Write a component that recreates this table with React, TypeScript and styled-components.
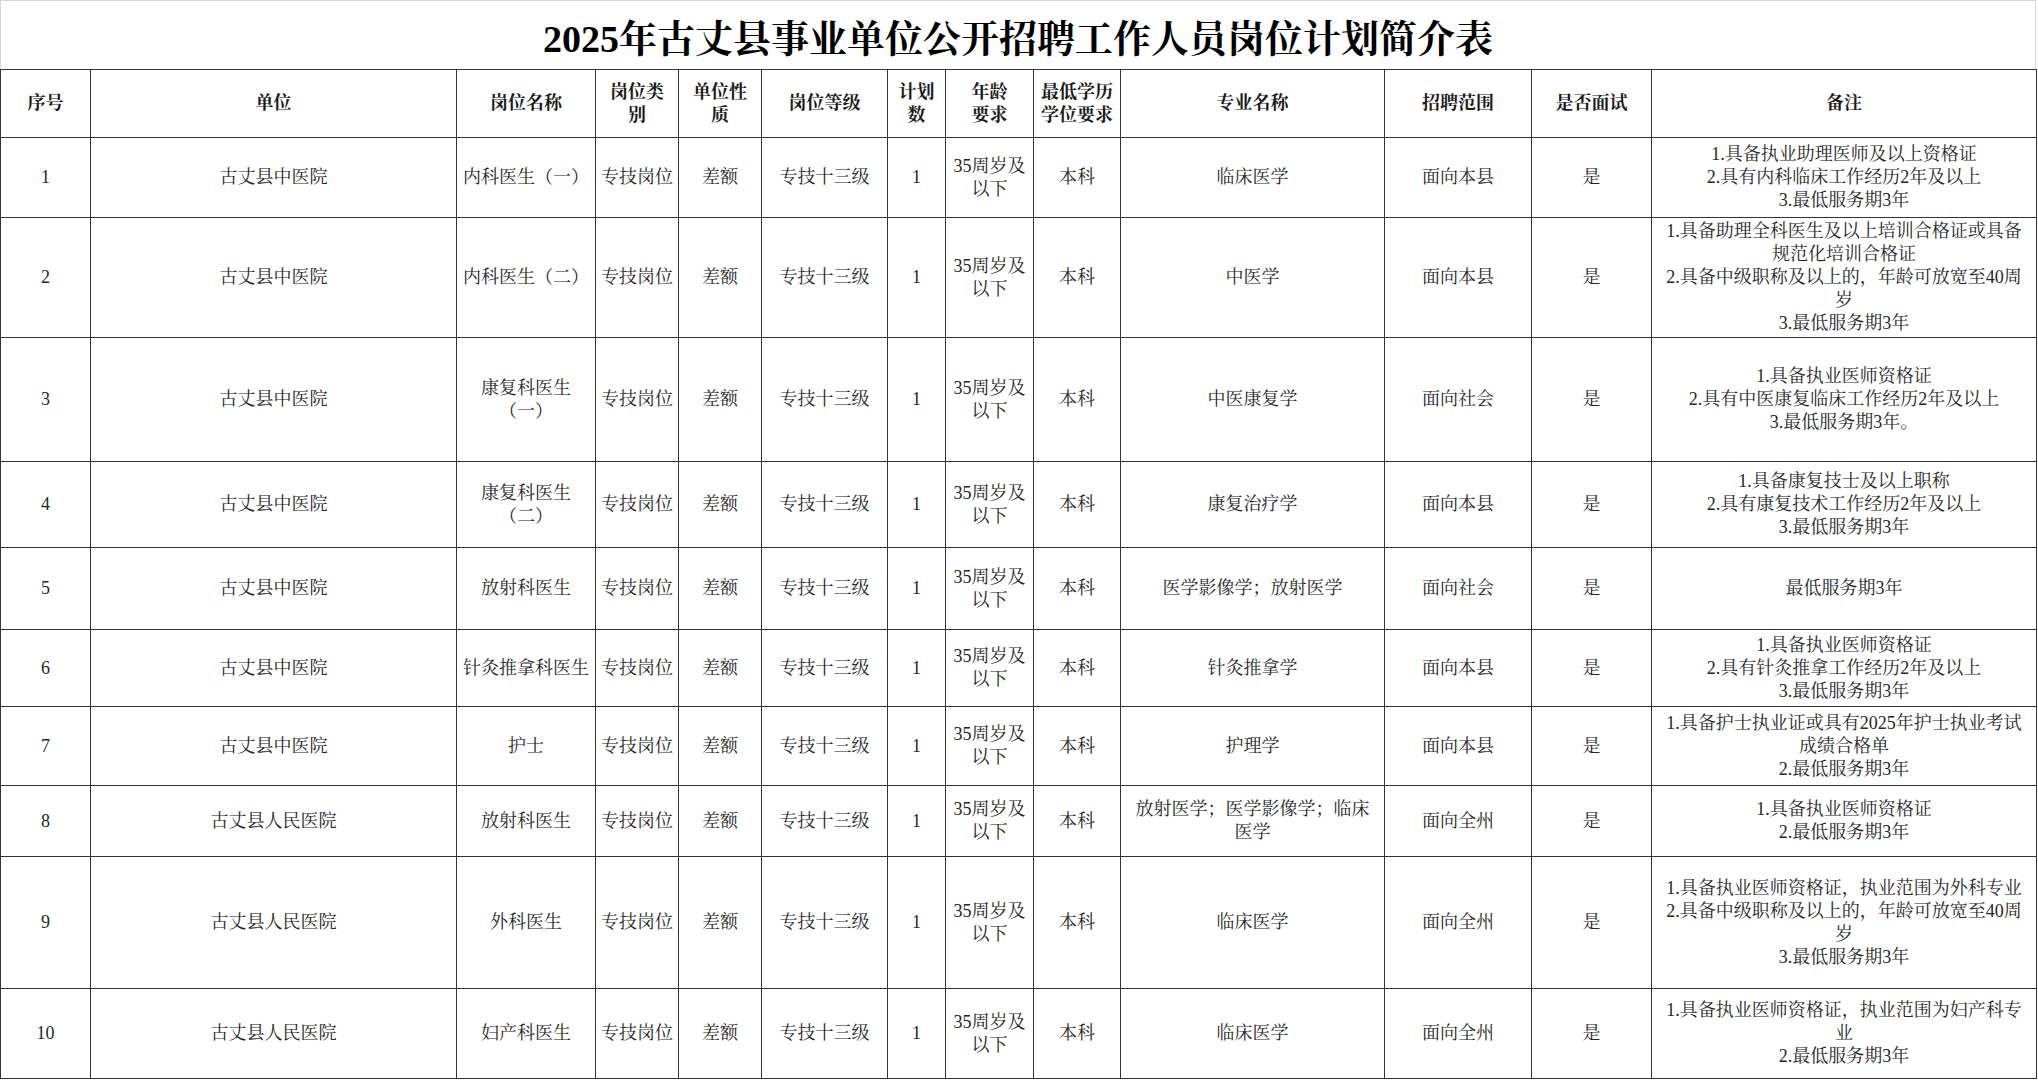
import { FC } from 'react';
import styled, { createGlobalStyle } from 'styled-components';

const GlobalStyle = createGlobalStyle`
  html, body {
    margin: 0;
    padding: 0;
    background: #ffffff;
  }
  body {
    font-family: "Liberation Serif", "Noto Serif CJK SC", "Noto Sans CJK SC", serif;
    color: #1e1e1e;
  }
`;

const Page = styled.div`
  width: 2038px;
  height: 1080px;
  overflow: hidden;
  background: #fff;
`;

const TitleBar = styled.div`
  box-sizing: border-box;
  width: 2036px;
  height: 69px;
  border: 1px solid #d6d6d6;
  border-bottom: none;
  display: flex;
  align-items: center;
  justify-content: center;
`;

const Title = styled.h1`
  margin: 0;
  font-size: 38px;
  font-weight: 700;
  color: #000;
  letter-spacing: 0;
  font-family: "Liberation Serif", "Noto Serif CJK SC", "Noto Sans CJK SC", serif;
`;

const Table = styled.table`
  width: 2036px;
  table-layout: fixed;
  border-collapse: collapse;
  font-size: 18px;
  line-height: 23px;
`;

const HeadRow = styled.tr`
  height: 68px;
`;

const Row = styled.tr<{ $h: number }>`
  height: ${(p) => p.$h}px;
`;

const Th = styled.th`
  border: 1px solid #333;
  padding: 0 2px;
  font-weight: 700;
  text-align: center;
  vertical-align: middle;
  white-space: pre;
  color: #1a1a1a;
`;

const Td = styled.td`
  border: 1px solid #333;
  padding: 0 2px;
  text-align: center;
  vertical-align: middle;
  white-space: pre;
  color: #262626;
`;

const widths = [90, 366, 139, 83, 83, 126, 58, 88, 87, 264, 147, 120, 385];

const headers = [
  '序号',
  '单位',
  '岗位名称',
  '岗位类\n别',
  '单位性\n质',
  '岗位等级',
  '计划\n数',
  '年龄\n要求',
  '最低学历\n学位要求',
  '专业名称',
  '招聘范围',
  '是否面试',
  '备注',
];

interface Post {
  h: number;
  unit: string;
  name: string;
  major: string;
  scope: string;
  note: string;
}

const ZYY = '古丈县中医院';
const RMYY = '古丈县人民医院';

const posts: Post[] = [
  {
    h: 80,
    unit: ZYY,
    name: '内科医生（一）',
    major: '临床医学',
    scope: '面向本县',
    note: '1.具备执业助理医师及以上资格证\n2.具有内科临床工作经历2年及以上\n3.最低服务期3年',
  },
  {
    h: 120,
    unit: ZYY,
    name: '内科医生（二）',
    major: '中医学',
    scope: '面向本县',
    note: '1.具备助理全科医生及以上培训合格证或具备\n规范化培训合格证\n2.具备中级职称及以上的，年龄可放宽至40周\n岁\n3.最低服务期3年',
  },
  {
    h: 124,
    unit: ZYY,
    name: '康复科医生\n（一）',
    major: '中医康复学',
    scope: '面向社会',
    note: '1.具备执业医师资格证\n2.具有中医康复临床工作经历2年及以上\n3.最低服务期3年。',
  },
  {
    h: 86,
    unit: ZYY,
    name: '康复科医生\n（二）',
    major: '康复治疗学',
    scope: '面向本县',
    note: '1.具备康复技士及以上职称\n2.具有康复技术工作经历2年及以上\n3.最低服务期3年',
  },
  {
    h: 82,
    unit: ZYY,
    name: '放射科医生',
    major: '医学影像学；放射医学',
    scope: '面向社会',
    note: '最低服务期3年',
  },
  {
    h: 77,
    unit: ZYY,
    name: '针灸推拿科医生',
    major: '针灸推拿学',
    scope: '面向本县',
    note: '1.具备执业医师资格证\n2.具有针灸推拿工作经历2年及以上\n3.最低服务期3年',
  },
  {
    h: 79,
    unit: ZYY,
    name: '护士',
    major: '护理学',
    scope: '面向本县',
    note: '1.具备护士执业证或具有2025年护士执业考试\n成绩合格单\n2.最低服务期3年',
  },
  {
    h: 71,
    unit: RMYY,
    name: '放射科医生',
    major: '放射医学；医学影像学；临床\n医学',
    scope: '面向全州',
    note: '1.具备执业医师资格证\n2.最低服务期3年',
  },
  {
    h: 132,
    unit: RMYY,
    name: '外科医生',
    major: '临床医学',
    scope: '面向全州',
    note: '1.具备执业医师资格证，执业范围为外科专业\n2.具备中级职称及以上的，年龄可放宽至40周\n岁\n3.最低服务期3年',
  },
  {
    h: 90,
    unit: RMYY,
    name: '妇产科医生',
    major: '临床医学',
    scope: '面向全州',
    note: '1.具备执业医师资格证，执业范围为妇产科专\n业\n2.最低服务期3年',
  },
];

const App: FC = () => (
  <Page>
    <GlobalStyle />
    <TitleBar>
      <Title>2025年古丈县事业单位公开招聘工作人员岗位计划简介表</Title>
    </TitleBar>
    <Table>
      <colgroup>
        {widths.map((w, i) => (
          <col key={i} style={{ width: w }} />
        ))}
      </colgroup>
      <thead>
        <HeadRow>
          {headers.map((h) => (
            <Th key={h}>{h}</Th>
          ))}
        </HeadRow>
      </thead>
      <tbody>
        {posts.map((p, i) => (
          <Row key={i} $h={p.h}>
            <Td>{i + 1}</Td>
            <Td>{p.unit}</Td>
            <Td>{p.name}</Td>
            <Td>专技岗位</Td>
            <Td>差额</Td>
            <Td>专技十三级</Td>
            <Td>1</Td>
            <Td>{'35周岁及\n以下'}</Td>
            <Td>本科</Td>
            <Td>{p.major}</Td>
            <Td>{p.scope}</Td>
            <Td>是</Td>
            <Td>{p.note}</Td>
          </Row>
        ))}
      </tbody>
    </Table>
  </Page>
);

export default App;
